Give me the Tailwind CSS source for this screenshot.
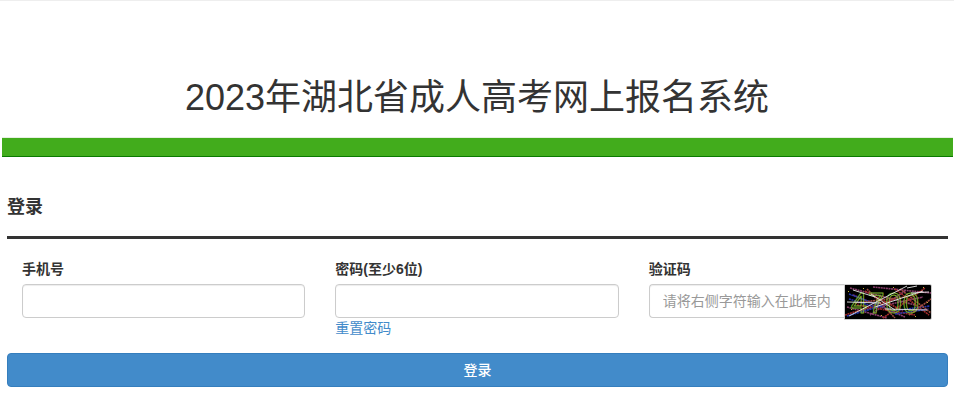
<!DOCTYPE html>
<html lang="zh-CN">
<head>
<meta charset="utf-8">
<title>2023年湖北省成人高考网上报名系统</title>
<script src="https://cdn.jsdelivr.net/npm/@tailwindcss/browser@4"></script>
</head>
<body class="bg-white text-[#333] font-['Liberation_Sans','Noto_Sans_CJK_SC',sans-serif] text-[14px] overflow-hidden">
<div class="h-[417px] w-[954px] border-t border-[#eee]">
  <h1 class="text-center text-[36px] leading-[40px] h-[136px] pt-[77px] font-normal text-[#333]">2023年湖北省成人高考网上报名系统</h1>
  <div class="ml-[2px] mr-px h-[20px] bg-[#42ac1c] border-t border-[#e8efe4] border-b border-b-[#0a7a00]"></div>
  <main class="px-[7px]">
    <h2 class="mt-[39px] text-[18px] leading-[22px] font-bold pb-[18px] border-b-[3px] border-[#333] w-[941px] text-[#333]">登录</h2>
    <form>
      <div class="grid grid-cols-3 mt-[20px] w-[940px]">
        <div class="px-[15px]">
          <label class="block text-[14px] leading-[20px] font-bold mb-[5px]">手机号</label>
          <input type="text" class="block w-full h-[34px] rounded border border-[#ccc] bg-white shadow-[inset_0_1px_1px_rgba(0,0,0,0.075)]">
        </div>
        <div class="px-[15px]">
          <label class="block text-[14px] leading-[20px] font-bold mb-[5px]">密码(至少6位)</label>
          <input type="password" class="block w-full h-[34px] rounded border border-[#ccc] bg-white shadow-[inset_0_1px_1px_rgba(0,0,0,0.075)]">
          <a href="#" class="block text-[14px] leading-[20px] text-[#428bca]">重置密码</a>
        </div>
        <div class="px-[15px]">
          <label class="block text-[14px] leading-[20px] font-bold mb-[5px]">验证码</label>
          <div class="flex items-start">
            <input type="text" placeholder="请将右侧字符输入在此框内" class="block w-[195px] h-[34px] rounded-l border border-[#ccc] border-r-0 bg-white pl-[13px] pr-0 text-[14px] placeholder:text-[#999] shadow-[inset_0_1px_1px_rgba(0,0,0,0.075)]">
            <svg class="block w-[88px] h-[36px] shrink-0 border border-[#ccc] rounded-r-[2px]" viewBox="0 0 86 34">
              <rect width="86" height="34" fill="#000"/>
              <g fill="none" stroke-width="1.6" stroke-dasharray="2 0.6">
                <path d="M5 3 L70 20 M8 10 L60 32 M28 2 L86 8 M60 6 L25 30 M14 26 L78 12 M2 22 L42 33" stroke="#8a3f6c"/>
                <path d="M0 30 L50 14 M38 33 L80 3 M12 20 L70 30 M50 4 L84 30 M20 6 L58 26" stroke="#a02a2a"/>
                <path d="M4 9 L44 24 M46 26 L85 21 M2 31 L40 20 M50 29 L84 24 M4 14 L30 22" stroke="#2233aa"/>
                <path d="M55 4 L86 28 M22 4 L50 33 M10 18 L60 12 M64 30 L86 14" stroke="#9c4a40"/>
              </g>
              <text x="6" y="28" font-family="Liberation Sans, sans-serif" font-size="29" textLength="68" fill="none" stroke="#7fb02f" stroke-width="1">4700</text>
              <g fill="none" stroke="#e8e8e8" stroke-width="0.9">
                <path d="M2 17 L36 18 M4 31 L62 1 M26 9 L50 25 M30 22 L78 6 M40 24 L82 25 M62 3 L72 1 M8 5 L30 12 M66 8 L84 7"/>
              </g>
              <g fill="#c9b23a">
                <rect x="3" y="6" width="1" height="1"/><rect x="78" y="2" width="1" height="1"/><rect x="82" y="17" width="1" height="1"/><rect x="48" y="2" width="1" height="1"/><rect x="6" y="24" width="1" height="1"/><rect x="70" y="31" width="1" height="1"/><rect x="36" y="30" width="1" height="1"/><rect x="18" y="3" width="1" height="1"/>
              </g>
            </svg>
          </div>
        </div>
      </div>
      <button type="button" class="block w-[941px] h-[34px] mt-[15px] rounded bg-[#428bca] border border-[#357ebd] text-white text-[14px] font-medium text-center">登录</button>
    </form>
  </main>
</div>
</body>
</html>
